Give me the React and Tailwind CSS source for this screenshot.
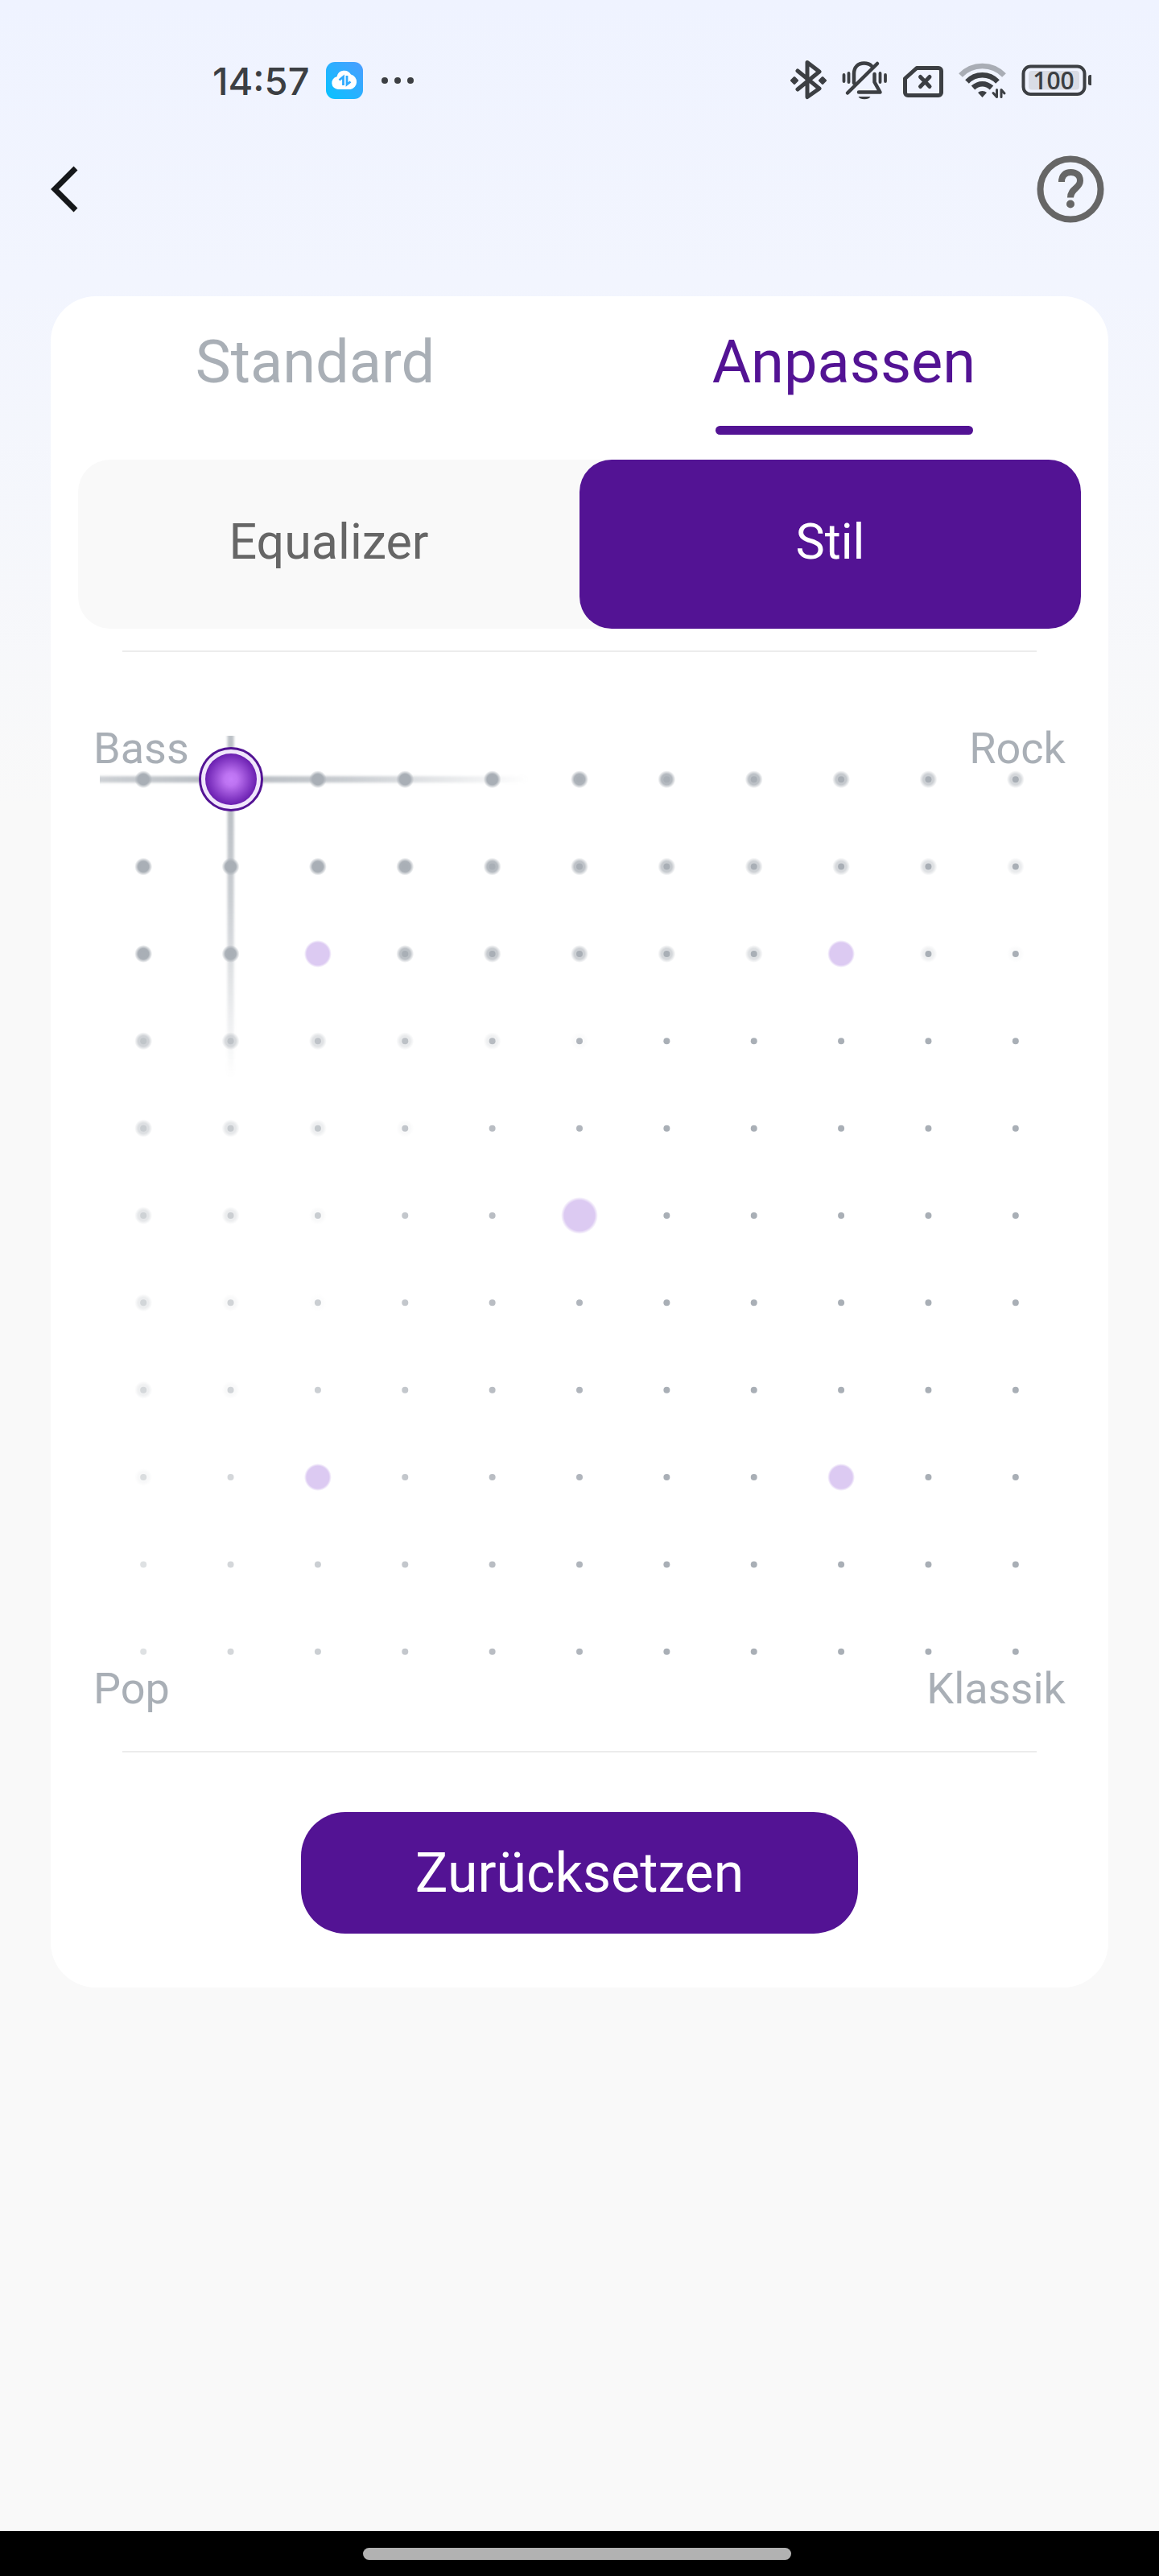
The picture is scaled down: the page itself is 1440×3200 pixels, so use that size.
const PURPLE = '#531394';
const CELL = 108.5;
const HALO = [
  [1, 1, 1, 1, 1, 0.96, 0.88, 0.78, 0.68, 0.6, 0.5],
  [1, 1, 1, 0.98, 0.86, 0.76, 0.66, 0.58, 0.48, 0.38, 0.25],
  [1, 0.98, 0, 0.78, 0.66, 0.58, 0.5, 0.38, 0, 0.18, 0.05],
  [0.56, 0.46, 0.36, 0.26, 0.18, 0.05, 0, 0, 0, 0, 0],
  [0.4, 0.3, 0.2, 0.07, 0, 0, 0, 0, 0, 0, 0],
  [0.3, 0.22, 0.07, 0, 0, 0, 0, 0, 0, 0, 0],
  [0.22, 0.08, 0.03, 0, 0, 0, 0, 0, 0, 0, 0],
  [0.18, 0.07, 0, 0, 0, 0, 0, 0, 0, 0, 0],
  [0.08, 0, 0, 0, 0, 0, 0, 0, 0, 0, 0],
  [0, 0, 0, 0, 0, 0, 0, 0, 0, 0, 0],
  [0, 0, 0, 0, 0, 0, 0, 0, 0, 0, 0],
];
const CORE = [0.38, 0.5, 0.6, 0.7, 0.82, 0.92, 1, 1, 1, 1, 1];
const PRESETS = { '2-2': 17, '2-8': 17, '5-5': 23, '8-2': 17, '8-8': 17 };
const HANDLE = { row: 0, col: 1 };

const center = (i) => CELL * i + CELL / 2;

function StatusBar() {
  return (
    <div className="flex items-center justify-between pt-[70px] pr-[84px] pl-[264px] text-[#3c3f43]">
      <div className="flex h-12 items-center">
        <span className="font-['Inter','Roboto',sans-serif] text-[47px] leading-none font-medium">14:57</span>
        <svg className="ml-5 size-[46px]" viewBox="0 0 46 46" aria-hidden="true">
          <defs>
            <linearGradient id="cloudBg" x1="0" y1="1" x2="1" y2="0">
              <stop offset="0" stopColor="#06c3ff" />
              <stop offset="1" stopColor="#4d9dff" />
            </linearGradient>
          </defs>
          <rect width="46" height="46" rx="11" fill="url(#cloudBg)" />
          <path d="M15 34a8 8 0 0 1-1.500-15.800A9.500 9.500 0 0 1 31 15.500A9.500 9.500 0 0 1 30.500 34Z" fill="#fff" />
          <path d="M16.500 22.500l5-4V29M26 17V28l4.500-3.500" fill="none" stroke="#2fabff" strokeWidth="2.800" />
        </svg>
        <svg className="ml-[22px] h-2 w-[42px]" viewBox="0 0 42 8" aria-hidden="true" fill="currentColor">
          <circle cx="5" cy="4" r="4" /><circle cx="21" cy="4" r="4" /><circle cx="37" cy="4" r="4" />
        </svg>
      </div>
      <svg className="h-[60px] w-[380px]" viewBox="16 10 380 60" aria-label="Bluetooth, stumm, keine SIM, WLAN, Akku 100" role="img" fill="none" stroke="currentColor" strokeLinecap="round" strokeLinejoin="round">
        <path d="M31 28L58 50L43 60.500V17.500L58 29L31 51" strokeWidth="5" />
        <path d="M27 36.500L30.500 40 27 43.500 23.500 40ZM62 36.500L65.500 40 62 43.500 58.500 40Z" fill="currentColor" strokeWidth="3" />
        <path d="M93 55.500L130 19" strokeWidth="4.500" />
        <path d="M101 43V31.500C101 23.500 106 18.500 113.500 18.500C117.500 18.500 121 20 123 22" strokeWidth="4.500" />
        <path d="M126.500 32V42L133.500 54.500H107" strokeWidth="4.500" />
        <path d="M106.500 60h15a8 5 0 0 1-15 0Z" fill="currentColor" stroke="none" />
        <path d="M88.500 33v8M94.500 31v11M133.500 31v11M140 33v8" strokeWidth="3.800" />
        <path d="M179 24.500H206a3.500 3.500 0 0 1 3.500 3.500V55a3.500 3.500 0 0 1-3.500 3.500H168a3.500 3.500 0 0 1-3.500-3.500V37.500Z" strokeWidth="5" />
        <path d="M183.500 35.500l11.500 12M195 35.500l-11.500 12" strokeWidth="5" />
        <g strokeLinecap="butt">
          <path d="M233.500 33.500C248 18 273 18 287.500 33.500" stroke="#a9adb5" strokeWidth="6.500" />
          <path d="M241.500 41.500C252 30.500 269 30.500 279.500 41.500" strokeWidth="6.500" />
          <path d="M249 49C256 42.500 265 42.500 272 49" strokeWidth="6.500" />
        </g>
        <path d="M255 55a8 7 0 0 1 11 0l-5.500 6Z" fill="currentColor" stroke="none" />
        <path d="M278.500 51.500V60.500l-4.500-5M284 60.500V51.500l4 4.500" strokeWidth="3" />
        <rect x="311.500" y="22.500" width="76" height="34.500" rx="9" strokeWidth="4" />
        <rect x="318" y="28" width="63" height="23.500" rx="4" fill="#d9dce5" stroke="none" />
        <rect x="392" y="33" width="5" height="13" rx="2.500" fill="currentColor" stroke="none" />
        <text x="349" y="51" textAnchor="middle" className="font-['Open_Sans',sans-serif] text-[30px] font-semibold" fill="currentColor" stroke="none">100</text>
      </svg>
    </div>
  );
}

function StylePad() {
  const x = center(HANDLE.col);
  const y = center(HANDLE.row);
  const size = CELL * 11;
  return (
    <div className="relative mx-[61px] mt-[104px]">
      <svg className="block h-auto w-full" viewBox={`0 0 ${size} ${size}`} aria-hidden="true">
        <defs>
          <radialGradient id="halo">
            <stop offset="0.600" stopColor="#a9afb6" />
            <stop offset="1" stopColor="#a9afb6" stopOpacity="0" />
          </radialGradient>
          <radialGradient id="preset">
            <stop offset="0.820" stopColor="#dccaf2" />
            <stop offset="1" stopColor="#dccaf2" stopOpacity="0" />
          </radialGradient>
          <radialGradient id="beam" gradientUnits="userSpaceOnUse" cx={x} cy={y} r="370">
            <stop offset="0" stopColor="#a9afb6" stopOpacity="0.850" />
            <stop offset="0.400" stopColor="#a9afb6" stopOpacity="0.620" />
            <stop offset="1" stopColor="#a9afb6" stopOpacity="0" />
          </radialGradient>
          <filter id="soft" filterUnits="userSpaceOnUse" x="0" y="0" width={size} height={size}>
            <feGaussianBlur stdDeviation="1.500" />
          </filter>
        </defs>
        <g fill="url(#beam)" filter="url(#soft)">
          <rect x="-20" y={y - 4} width={x + 390} height="8" />
          <rect x={x - 4} y="-20" width="8" height={y + 390} />
        </g>
        {HALO.map((line, r) =>
          line.map((halo, c) => {
            const preset = PRESETS[`${r}-${c}`];
            if (preset) return <circle key={c} cx={center(c)} cy={center(r)} r={preset} fill="url(#preset)" />;
            return (
              <g key={c}>
                <circle cx={center(c)} cy={center(r)} r="11" fill="url(#halo)" opacity={halo} />
                <circle cx={center(c)} cy={center(r)} r="4" fill="#a9afb6" opacity={r < 3 ? 1 : CORE[c]} />
              </g>
            );
          }),
        )}
      </svg>
      <button
        type="button"
        aria-label="Stil wählen"
        className="absolute size-20 -translate-1/2 rounded-full"
        style={{ left: `${(x / size) * 100}%`, top: `${(y / size) * 100}%` }}
      >
        <svg className="size-full" viewBox="0 0 80 80" aria-hidden="true">
          <defs>
            <radialGradient id="knob">
              <stop offset="0" stopColor="#c57cfa" />
              <stop offset="0.250" stopColor="#bd73f2" />
              <stop offset="1" stopColor="#6a1fb0" />
            </radialGradient>
          </defs>
          <circle cx="40" cy="40" r="38.500" fill="#f0e6fb" stroke={PURPLE} strokeWidth="3" />
          <circle cx="40" cy="40" r="32" fill="url(#knob)" />
        </svg>
      </button>
      <div className="pointer-events-none absolute -inset-x-2 -top-4 -bottom-6 flex flex-col justify-between text-[54px] leading-16 text-[#a9afb6]">
        <div className="flex justify-between"><span>Bass</span><span>Rock</span></div>
        <div className="flex justify-between"><span>Pop</span><span>Klassik</span></div>
      </div>
    </div>
  );
}

export default function App() {
  return (
    <div className="flex min-h-screen flex-col bg-[#f9f9f9] bg-[linear-gradient(to_bottom,#eff3ff_0px,#f2f5fe_350px,#f9f9f9_1000px)] font-['Roboto',sans-serif]">
      <StatusBar />
      <header className="mt-[63px] flex items-center justify-between pr-[68px] pl-[62px]">
        <button type="button" aria-label="Zurück">
          <svg className="h-[58px] w-9" viewBox="0 0 36 58" fill="none" stroke="#15171a" strokeWidth="7"><path d="M32 3L6 29L32 55" /></svg>
        </button>
        <button type="button" aria-label="Hilfe">
          <svg className="size-[84px]" viewBox="0 0 84 84" fill="none" stroke="#666">
            <circle cx="42" cy="42" r="37.500" strokeWidth="8" />
            <path d="M31 33C31 25 35.500 21 42.500 21S54 25 54 31.500C54 41 42 41 42 52.500" strokeWidth="8" />
            <circle cx="42" cy="60.500" r="5" fill="#666" stroke="none" />
          </svg>
        </button>
      </header>

      <main className="mx-[63px] mt-[91px] flex flex-col rounded-[56px] bg-white pb-[67px]">
        <nav className="flex h-[203px]">
          <button type="button" className="flex flex-1 flex-col items-center pt-[38px] text-[74px] leading-[88px] text-[#a9afb6]">Standard</button>
          <button type="button" className="flex flex-1 flex-col items-center pt-[38px] text-[74px] leading-[88px] text-[#531394]">
            <span>Anpassen</span>
            <span className="mt-[35px] h-[11px] w-80 rounded-full bg-[#531394]" />
          </button>
        </nav>
        <div className="mx-[34px] grid h-[210px] grid-cols-2 rounded-[40px] bg-[#f9f9f9] text-[61px]">
          <button type="button" className="rounded-[40px] pb-1 text-[#666]">Equalizer</button>
          <button type="button" className="rounded-[40px] bg-[#531394] pb-1 text-white">Stil</button>
        </div>
        <hr className="mx-[89px] mt-[27px] border-t-2 border-[#ececec]" />
        <StylePad />
        <hr className="mx-[89px] mt-[69px] border-t-2 border-[#ececec]" />
        <button type="button" className="mt-[74px] h-[151px] self-center rounded-[55px] bg-[#531394] px-[142px] text-[68px] text-white">Zurücksetzen</button>
      </main>

      <footer className="mt-auto flex h-14 items-center justify-center bg-black pr-1.5">
        <div className="h-[15px] w-[532px] rounded-full bg-[#b2b2b2]" />
      </footer>
    </div>
  );
}
